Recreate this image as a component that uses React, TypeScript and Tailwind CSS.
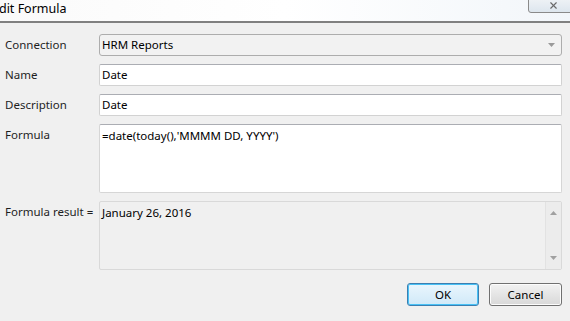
import { X } from 'lucide-react'

const font = { fontFamily: '"Noto Sans", "Segoe UI", sans-serif' }

function Label({ children }: { children: React.ReactNode }) {
  return <div className="w-[99px] shrink-0 whitespace-nowrap pl-[5px] text-[11.5px] text-[#1e1e1e]">{children}</div>
}

function Field({ value }: { value: string }) {
  return (
    <div className="flex h-[22px] flex-1 items-center rounded-[2px] border border-[#d2d2d2] border-t-[#abadb3] bg-white px-[2px] text-[11.5px] text-black">
      {value}
    </div>
  )
}

export default function App() {
  return (
    <div className="h-[321px] w-[570px] overflow-hidden bg-[#f0f0f0]" style={font}>
      {/* title bar */}
      <div className="relative flex h-[23px] items-center border-b-2 border-[#808080] bg-gradient-to-r from-[#fafafa] via-white to-[#f2f6fa]">
        <span className="-ml-[8px] -mt-[3px] text-[12.5px] text-black">Edit Formula</span>
        <div className="absolute right-[-8px] top-[-6px] flex h-[19px] w-[50px] items-center justify-center rounded-[3px] border border-[#8a8a8a] bg-gradient-to-b from-[#f4f6f8] to-[#dde6ee]">
          <X size={11} strokeWidth={2.5} className="mt-[3px] text-[#6a6a6a]" />
        </div>
      </div>

      <div className="flex flex-col pr-[8px] pt-[11px]">
        <div className="flex items-center">
          <Label>Connection</Label>
          <div className="flex h-[22px] flex-1 items-center justify-between rounded-[3px] border border-[#adadad] bg-[#f2f2f2] pl-[2px] pr-[6px] text-[11.5px] text-black">
            <span>HRM Reports</span>
            <svg width="7" height="4" viewBox="0 0 7 4">
              <path d="M0 0h7L3.5 4z" fill="#9a9a9a" />
            </svg>
          </div>
        </div>

        <div className="mt-[8px] flex items-center">
          <Label>Name</Label>
          <Field value="Date" />
        </div>

        <div className="mt-[8px] flex items-center">
          <Label>Description</Label>
          <Field value="Date" />
        </div>

        <div className="mt-[8px] flex items-start">
          <Label>
            <span className="mt-[2px] block">Formula</span>
          </Label>
          <div className="h-[69px] flex-1 rounded-[2px] border border-[#d6d6d6] border-t-[#abadb3] bg-white px-[2px] pt-[2px] text-[11.5px] text-black">
            =date(today(),'MMMM DD, YYYY')
          </div>
        </div>

        <div className="mt-[8px] flex items-start">
          <Label>
            <span className="mt-[2px] block">Formula result =</span>
          </Label>
          <div className="flex h-[69px] flex-1 rounded-[2px] border border-[#d9d9d9] bg-[#f0f0f0] text-[11.5px] text-black">
            <div className="flex-1 px-[2px] pt-[2px]">January 26, 2016</div>
            <div className="flex w-[16px] flex-col items-center justify-between border-l border-[#e2e2e2] bg-[#ececec] py-[9px]">
              <svg width="7" height="4" viewBox="0 0 7 4">
                <path d="M3.5 0L7 4H0z" fill="#a0a0a0" />
              </svg>
              <svg width="7" height="4" viewBox="0 0 7 4">
                <path d="M0 0h7L3.5 4z" fill="#a0a0a0" />
              </svg>
            </div>
          </div>
        </div>

        <div className="mt-[13px] flex justify-end gap-[10px]">
          <button className="flex h-[23px] w-[72px] items-center justify-center rounded-[3px] border border-[#3c7fb1] bg-gradient-to-b from-[#eaf6fd] to-[#d0e9f8] text-[11.5px] text-black shadow-[inset_0_0_0_1px_#48c1f5]">
            OK
          </button>
          <button className="flex h-[23px] w-[73px] items-center justify-center rounded-[3px] border border-[#707070] bg-gradient-to-b from-[#f2f2f2] to-[#d8d8d8] text-[11.5px] text-black shadow-[inset_0_0_0_1px_#fcfcfc]">
            Cancel
          </button>
        </div>
      </div>
    </div>
  )
}
